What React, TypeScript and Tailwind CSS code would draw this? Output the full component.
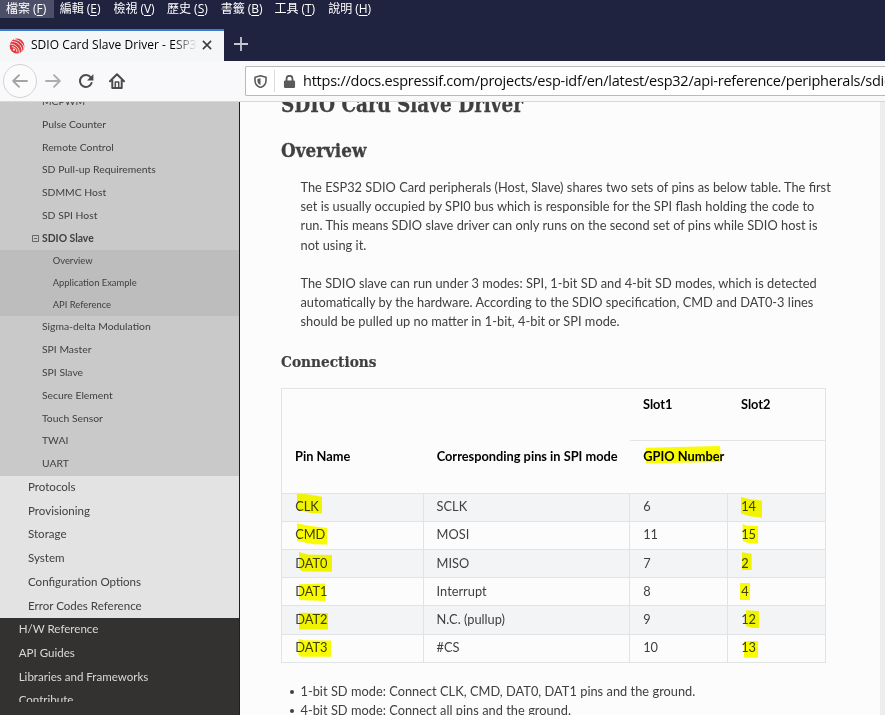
import React from "react";

const menus = [
  ["檔案", "F"],
  ["編輯", "E"],
  ["檢視", "V"],
  ["歷史", "S"],
  ["書籤", "B"],
  ["工具", "T"],
  ["說明", "H"],
];

const before = ["MCPWM", "Pulse Counter", "Remote Control", "SD Pull-up Requirements", "SDMMC Host", "SD SPI Host"];
const sections = ["Overview", "Application Example", "API Reference"];
const after = ["Sigma-delta Modulation", "SPI Master", "SPI Slave", "Secure Element", "Touch Sensor", "TWAI", "UART"];
const groups = ["Protocols", "Provisioning", "Storage", "System", "Configuration Options", "Error Codes Reference"];
const roots = ["H/W Reference", "API Guides", "Libraries and Frameworks", "Contribute"];

const rows = [
  ["CLK", "SCLK", "6", "14"],
  ["CMD", "MOSI", "11", "15"],
  ["DAT0", "MISO", "7", "2"],
  ["DAT1", "Interrupt", "8", "4"],
  ["DAT2", "N.C. (pullup)", "9", "12"],
  ["DAT3", "#CS", "10", "13"],
];

const modes = [
  "1-bit SD mode: Connect CLK, CMD, DAT0, DAT1 pins and the ground.",
  "4-bit SD mode: Connect all pins and the ground.",
];

// Marker strokes, in window coordinates; the overlay's viewBox starts at the table's corner.
const strokes = [
  "297,494 307,494.3 322,496.7 322,513.5 312,513.3 297,510",
  "297,523.3 307,525.5 327,528 327,544.6 313,544.3 297,540.7",
  "299,552 308,554.5 332,555 332,571.7 303,571.5 299,569",
  "299,584.3 325,583.6 325,601 299,600",
  "299,612.7 328,613 328,629.5 299,629.5",
  "298.5,639 304,640.3 331,640.5 331,656.7 301,656.7 298.5,655",
  "646,447.7 720,446 721.3,462 646,463.3",
  "741,497 751,499.5 762,500.5 762,517.7 750,516.3 741,513.5",
  "742.7,524 747,525.7 758,526 758,543.7 748,543 742.7,541",
  "742,552.3 751.7,553.7 751.7,570 742,570",
  "740,583 750,583 750,600 740,600",
  "746,610.3 759,611 759,628 752,628 746,626",
  "744,641 758,641 758,657.7 744,657.7",
];

function BrowserChrome() {
  return (
    <header className="h-[102px] shrink-0 bg-[#20233f] font-['Open_Sans','Noto_Sans_CJK_TC',sans-serif]">
      <nav className="flex h-[29px] items-start text-white">
        {menus.map(([name, key], i) => (
          <div
            key={key}
            className={`flex h-[18px] w-[53.7px] items-center whitespace-nowrap pl-[6px] text-[12px] leading-[18px] ${i === 0 ? "bg-[#4d4f68]" : ""}`}
          >
            {name}
            <span className="ml-[3px]">
              (<span className="underline underline-offset-2">{key}</span>)
            </span>
          </div>
        ))}
      </nav>
      <div className="flex h-[32px]">
        <div className="flex w-[224px] items-center border-t-2 border-[#3b7dd0] bg-[#f5f6f7]">
          <svg className="-mt-px ml-[9px] size-[16px]" viewBox="0 0 16 16">
            <circle cx="8" cy="8" r="7.4" fill="#e5353b" />
            <g fill="none" stroke="#f8e4e5" strokeWidth="1">
              <path d="M1 6.2C6 5.6 10.800 10 10.300 15.300" />
              <path d="M2.500 3.600C8.500 3.200 13.200 8 13 13.800" />
              <path d="M5 1.500C10.500 1.700 14.700 6 15 11" />
              <path d="M2.800 8.600C6 8.800 8 11 8 14" />
            </g>
            <circle cx="4.900" cy="11.700" r="1.100" fill="#f8e4e5" />
          </svg>
          <div className="-mt-[2px] ml-[6px] w-[166px] overflow-hidden whitespace-nowrap bg-gradient-to-r from-black from-86% to-transparent bg-clip-text text-[12px] leading-[20px] tracking-[0.04px] text-transparent">
            SDIO Card Slave Driver - ESP32
          </div>
          <svg className="-mt-[2px] ml-[5px] size-[10px]" viewBox="0 0 11 11" stroke="#3c3c3e" strokeWidth="1.700">
            <path d="M1 1l9 9M10 1l-9 9" />
          </svg>
        </div>
        <svg className="ml-[10px] mt-[8px] size-[14px]" viewBox="0 0 14 14" stroke="#c6c7d3" strokeWidth="1.800">
          <path d="M7 0v14M0 7h14" />
        </svg>
      </div>
      <div className="flex h-[41px] items-center border-b border-[#d8d8dc] bg-[#f9f9fb]">
        <div className="ml-[3px] grid size-[34px] place-items-center rounded-full border border-[#d3d3d5] bg-[#fbfbfc]">
          <svg className="size-[16px]" viewBox="0 0 16 16" fill="none" stroke="#a4a4a6" strokeWidth="1.900" strokeLinecap="round" strokeLinejoin="round">
            <path d="M15 8H1.500M7 2.200L1.200 8L7 13.800" />
          </svg>
        </div>
        <svg className="ml-[8px] size-[16px]" viewBox="0 0 16 16" fill="none" stroke="#adadaf" strokeWidth="1.900" strokeLinecap="round" strokeLinejoin="round">
          <path d="M1 8H14.500M9 2.200L14.800 8L9 13.800" />
        </svg>
        <svg className="ml-[16.500px] size-[16px]" viewBox="0 0 16 16">
          <path d="M12.700 4.300A6 6 0 1 0 13.600 10" fill="none" stroke="#4b4b4d" strokeWidth="2" strokeLinecap="round" />
          <path d="M15.400 1v6.400H9z" fill="#4b4b4d" />
        </svg>
        <svg className="ml-[15.500px] size-[16px]" viewBox="0 0 16 16" fill="none" stroke="#4b4b4d" strokeWidth="2" strokeLinejoin="round" strokeLinecap="round">
          <path d="M1 8.200L8 1.300L15 8.200M3.300 7.500V15H12.700V7.500" />
          <path d="M6.300 14.500V9H9.700V14.500" strokeWidth="1.500" />
        </svg>
        <div className="ml-[120px] flex h-[30px] flex-1 items-center rounded-l-[2px] border border-r-0 border-[#b9b9bc] bg-white">
          <svg className="ml-[7.500px] size-[13px]" viewBox="0 0 13 13">
            <path d="M6.500.800L12 2.300V5.500C12 9.200 10 11.300 6.500 12.500C3 11.300 1 9.200 1 5.500V2.300Z" fill="none" stroke="#5b5b5d" strokeWidth="1.600" strokeLinejoin="round" />
            <path d="M6.500 3.200V10C4.300 9 3.400 7.800 3.400 5.500V4Z" fill="#5b5b5d" />
          </svg>
          <div className="ml-[7.500px] h-[22px] w-px bg-[#dcdcde]" />
          <svg className="ml-[7.500px] size-[13px]" viewBox="0 0 13 14">
            <path d="M3.300 7V4a3.200 3.200 0 0 1 6.400 0V7" fill="none" stroke="#5b5b5d" strokeWidth="2" />
            <rect x=".5" y="6" width="12" height="8" rx="1.300" fill="#5b5b5d" />
          </svg>
          <span className="ml-[7.500px] w-[582px] overflow-hidden whitespace-nowrap text-[14.500px] leading-[24px] tracking-[-0.240px] text-[#0c0c0d]">
            https://docs.espressif.com/projects/esp-idf/en/latest/esp32/api-reference/peripherals/sdio_slave.html
          </span>
        </div>
      </div>
    </header>
  );
}

function Leaf({ text, short }: { text: string; short: boolean }) {
  return <li className={`pl-[42px] text-[10.370px] ${short ? "h-[22px]" : "h-[23px]"}`}>{text}</li>;
}

function Sidebar() {
  return (
    <aside className="w-[240px] shrink-0 overflow-hidden border-r border-[#1f1f1f] bg-[#343131] text-[#404040]">
      <div className="h-[600px] overflow-hidden">
        <ul className="-mt-[12px] bg-[#c9c9c9] leading-[22px]">
          {before.map((t, i) => (
            <Leaf key={t} text={t} short={i === 2} />
          ))}
          <li className="flex h-[23px] items-center pl-[32px] text-[10.370px] font-bold leading-[23px]">
            <svg className="mr-[3px] size-[7px]" viewBox="0 0 7 7" fill="none" stroke="#666">
              <path d="M.5.500H6.500V6.500H.5ZM2 3.500H5" />
            </svg>
            SDIO Slave
          </li>
        </ul>
        <ul className="bg-[#bdbdbd]">
          {sections.map((t) => (
            <li key={t} className="h-[22px] pl-[52.700px] text-[9.400px] leading-[22px]">
              {t}
            </li>
          ))}
        </ul>
        <ul className="bg-[#c9c9c9] leading-[20px]">
          {after.map((t, i) => (
            <Leaf key={t} text={t} short={i === 4} />
          ))}
        </ul>
        <ul className="bg-[#e3e3e3]">
          {groups.map((t, i) => (
            <li key={t} className={`pl-[28px] text-[11.560px] leading-[21px] ${i === 1 || i === 5 ? "h-[23px]" : "h-[24px]"}`}>
              {t}
            </li>
          ))}
        </ul>
        <ul className="text-[#d9d9d9]">
          {roots.map((t, i) => (
            <li key={t} className={`pl-[18.700px] text-[11.560px] leading-[21px] ${i === 2 ? "h-[23px]" : "h-[24px]"}`}>
              {t}
            </li>
          ))}
        </ul>
      </div>
    </aside>
  );
}

function PinTable() {
  return (
    <div className="relative mt-[13px] w-[545px] border border-[#e1e4e5]">
      <div className="grid h-[104px] grid-cols-[142px_206px_1fr] font-bold text-black">
        <div className="pl-[13px] pt-[57px] leading-[20px]">Pin Name</div>
        <div className="pl-[12.700px] pt-[57px] leading-[20px]">Corresponding pins in SPI mode</div>
        <div>
          <div className="flex h-[52px] border-b border-[#e1e4e5] pt-[5px] leading-[20px]">
            <span className="w-[98px] pl-[13px]">Slot1</span>
            <span className="pl-[13px]">Slot2</span>
          </div>
          <div className="pl-[13.300px] pt-[5px] leading-[20px]">GPIO Number</div>
        </div>
      </div>
      {rows.map((row, i) => (
        <div
          key={row[0]}
          className={`grid grid-cols-[142px_206px_98px_1fr] border-t border-[#e1e4e5] ${i < 2 || i === 5 ? "leading-[24.500px]" : "leading-[26px]"} ${i === 4 ? "h-[29px]" : "h-[28px]"} ${i % 2 === 0 ? "bg-[#f3f4f6]" : ""}`}
        >
          {row.map((cell, j) => (
            <div key={j} className={`${j === 1 ? "pl-[12.600px]" : "pl-[13.200px]"} ${j < 3 ? "border-r border-[#e1e4e5]" : ""}`}>
              {cell}
            </div>
          ))}
        </div>
      ))}
      <svg className="absolute -left-px -top-px h-[275px] w-[545px] mix-blend-multiply" viewBox="281 388 545 275" fill="#fcff00">
        {strokes.map((points) => (
          <polygon key={points} points={points} />
        ))}
      </svg>
    </div>
  );
}

function Article() {
  return (
    <main className="w-[640px] shrink-0 overflow-hidden bg-[#fcfcfc] pl-[41px] text-[12.800px] text-[#404040]">
      <h1 className="-mt-[12px] h-[30px] origin-left scale-x-[0.838] whitespace-nowrap font-['Roboto_Slab','DejaVu_Serif',serif] text-[22px] font-bold leading-[29px] [-webkit-text-stroke:0.300px_#404040]">
        SDIO Card Slave Driver
      </h1>
      <h2 className="mt-[18px] h-[26px] origin-left scale-x-[0.91] whitespace-nowrap font-['Roboto_Slab','DejaVu_Serif',serif] text-[18.500px] font-bold leading-[26px] [-webkit-text-stroke:0.300px_#404040]">
        Overview
      </h2>
      <div className="mt-[14px] whitespace-nowrap pl-[19.500px] leading-[19.200px] [word-spacing:0.050px]">
        <p>
          The ESP32 SDIO Card peripherals (Host, Slave) shares two sets of pins as below table. The first
          <br />
          set is usually occupied by SPI0 bus which is responsible for the SPI flash holding the code to
          <br />
          run. This means SDIO slave driver can only runs on the second set of pins while SDIO host is
          <br />
          not using it.
        </p>
        <p className="mt-[19.200px]">
          The SDIO slave can run under 3 modes: SPI, 1-bit SD and 4-bit SD modes, which is detected
          <br />
          automatically by the hardware. According to the SDIO specification, CMD and DAT0-3 lines
          <br />
          should be pulled up no matter in 1-bit, 4-bit or SPI mode.
        </p>
      </div>
      <h3 className="mt-[19px] h-[24px] origin-left scale-x-[0.885] whitespace-nowrap font-['Roboto_Slab','DejaVu_Serif',serif] text-[15.500px] font-bold leading-[22px] [-webkit-text-stroke:0.200px_#404040]">
        Connections
      </h3>
      <PinTable />
      <ul className="mt-[19px] leading-[19.200px]">
        {modes.map((text) => (
          <li key={text} className="flex items-center pl-[9px] [word-spacing:0.120px]">
            <span className="mr-[6.500px] mt-[2px] size-[4px] rounded-full bg-[#404040]" />
            {text}
          </li>
        ))}
      </ul>
    </main>
  );
}

export default function App() {
  return (
    <div className="flex h-[715px] w-[885px] flex-col overflow-hidden bg-[#ededed] font-[Lato,sans-serif]">
      <BrowserChrome />
      <div className="flex h-[613px]">
        <Sidebar />
        <Article />
      </div>
    </div>
  );
}
